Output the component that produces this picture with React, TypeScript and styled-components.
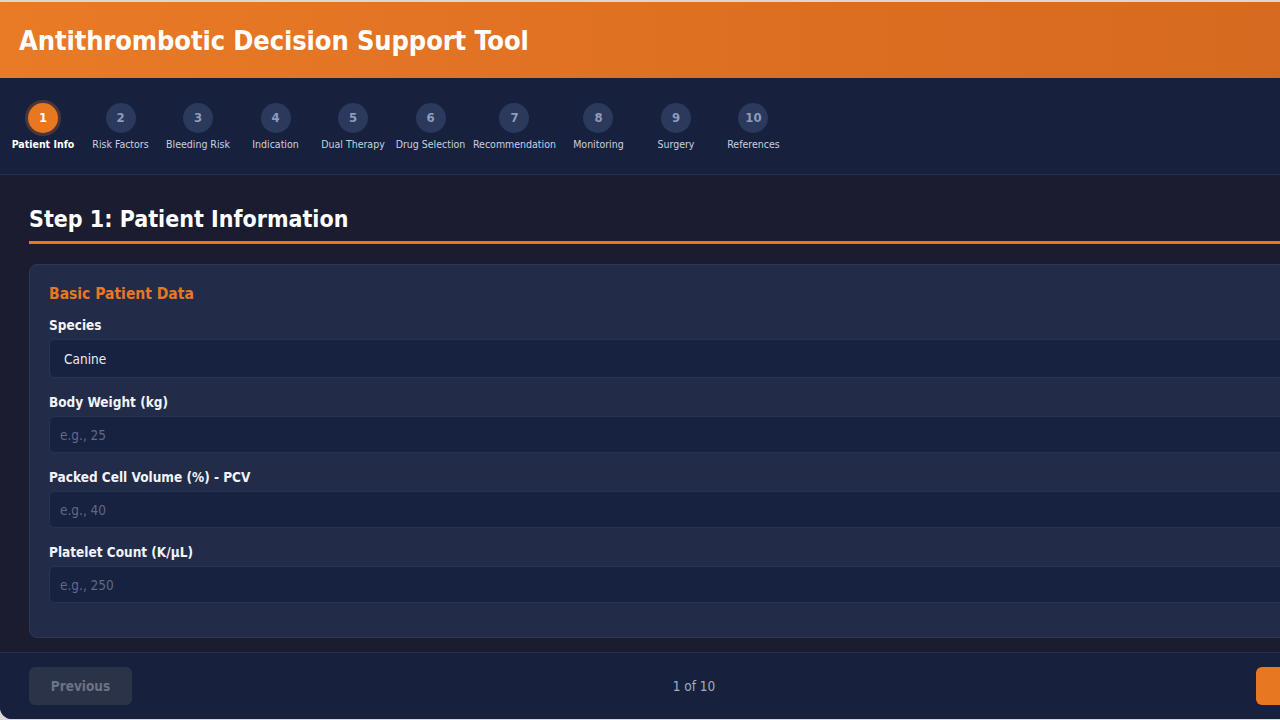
import React, { useState } from 'react';
import styled, { createGlobalStyle } from 'styled-components';

const GlobalStyle = createGlobalStyle`
  html, body {
    margin: 0;
    padding: 0;
    background: #d8d8d8;
    overflow: hidden;
  }
  * {
    box-sizing: border-box;
  }
`;

const FONT = `"DejaVu Sans Condensed", "DejaVu Sans", sans-serif`;

const Shell = styled.div`
  width: 1388px;
  height: 717px;
  margin-top: 2px;
  border-radius: 0 0 12px 12px;
  overflow: hidden;
  display: flex;
  flex-direction: column;
  font-family: ${FONT};
  background: #1b1c30;
`;

const Header = styled.header`
  height: 76px;
  padding: 0 19px;
  display: flex;
  align-items: center;
  background: linear-gradient(90deg, #e97a26 0%, #dc6e21 60%, #d4691f 100%);
`;

const Title = styled.h1`
  margin: 0;
  color: #ffffff;
  font-size: 27px;
  font-weight: 700;
  letter-spacing: -0.1px;
`;

const StepNav = styled.nav`
  height: 97px;
  padding: 0 8px;
  display: flex;
  align-items: center;
  gap: 7.5px;
  background: #17213e;
  border-bottom: 1px solid #243152;
`;

const Step = styled.div`
  min-width: 70px;
  display: flex;
  flex-direction: column;
  align-items: center;
  gap: 5px;
`;

const Circle = styled.div<{ $active?: boolean }>`
  width: 30px;
  height: 30px;
  border-radius: 50%;
  display: flex;
  align-items: center;
  justify-content: center;
  font-size: 13px;
  font-weight: 700;
  color: ${(p) => (p.$active ? '#ffffff' : '#8e9cbd')};
  background: ${(p) => (p.$active ? '#e87722' : '#2b395c')};
  box-shadow: ${(p) => (p.$active ? '0 0 0 3px rgba(232, 119, 34, 0.25)' : 'none')};
`;

const StepLabel = styled.span<{ $active?: boolean }>`
  font-size: 10.5px;
  white-space: nowrap;
  color: ${(p) => (p.$active ? '#ffffff' : '#c9d0e0')};
  font-weight: ${(p) => (p.$active ? 700 : 400)};
`;

const Main = styled.main`
  flex: 1;
  padding: 31px 0 14px 29px;
  background: #1b1c30;
`;

const Heading = styled.h2`
  margin: 0 0 20px;
  padding-bottom: 9px;
  border-bottom: 3px solid #e87722;
  color: #ffffff;
  font-size: 23px;
  font-weight: 700;
`;

const Card = styled.section`
  background: #222b48;
  border: 1px solid #2d3756;
  border-radius: 8px;
  padding: 20px 20px 34px 19px;
`;

const SectionTitle = styled.h3`
  margin: 0 0 14px;
  color: #e87722;
  font-size: 15.5px;
  font-weight: 700;
`;

const Field = styled.div`
  display: flex;
  flex-direction: column;
  gap: 5px;
  & + & {
    margin-top: 16px;
  }
`;

const Label = styled.label`
  color: #f1f3f8;
  font-size: 13.5px;
  font-weight: 700;
  line-height: 17px;
`;

const Select = styled.select`
  appearance: none;
  height: 39px;
  padding: 0 14px;
  background: #172140;
  border: 1px solid #283354;
  border-radius: 6px;
  color: #e8ebf2;
  font-family: ${FONT};
  font-size: 13.5px;
  outline: none;
`;

const Input = styled.input`
  height: 37px;
  padding: 0 10px;
  background: #172140;
  border: 1px solid #283354;
  border-radius: 6px;
  color: #e8ebf2;
  font-family: ${FONT};
  font-size: 13.5px;
  outline: none;
  &::placeholder {
    color: #5f6a84;
  }
`;

const Footer = styled.footer`
  height: 67px;
  padding: 0 29px;
  display: flex;
  align-items: center;
  justify-content: space-between;
  background: #17213e;
  border-top: 1px solid #25304f;
`;

const NavButton = styled.button<{ $primary?: boolean }>`
  height: 38px;
  width: 103px;
  padding: 0;
  border: none;
  border-radius: 6px;
  font-family: ${FONT};
  font-size: 13.5px;
  font-weight: 700;
  color: ${(p) => (p.$primary ? '#ffffff' : '#6b7488')};
  background: ${(p) => (p.$primary ? '#e87722' : '#2a3347')};
`;

const PageCount = styled.span`
  color: #a3abbd;
  font-size: 13.5px;
`;

const steps = [
  'Patient Info',
  'Risk Factors',
  'Bleeding Risk',
  'Indication',
  'Dual Therapy',
  'Drug Selection',
  'Recommendation',
  'Monitoring',
  'Surgery',
  'References',
];

const App = () => {
  const [current] = useState(0);

  return (
    <>
      <GlobalStyle />
      <Shell>
        <Header>
          <Title>Antithrombotic Decision Support Tool</Title>
        </Header>
        <StepNav>
          {steps.map((name, idx) => (
            <Step key={name}>
              <Circle $active={idx === current}>{idx + 1}</Circle>
              <StepLabel $active={idx === current}>{name}</StepLabel>
            </Step>
          ))}
        </StepNav>
        <Main>
          <Heading>Step 1: Patient Information</Heading>
          <Card>
            <SectionTitle>Basic Patient Data</SectionTitle>
            <Field>
              <Label>Species</Label>
              <Select defaultValue="canine">
                <option value="canine">Canine</option>
                <option value="feline">Feline</option>
              </Select>
            </Field>
            <Field>
              <Label>Body Weight (kg)</Label>
              <Input placeholder="e.g., 25" />
            </Field>
            <Field>
              <Label>Packed Cell Volume (%) - PCV</Label>
              <Input placeholder="e.g., 40" />
            </Field>
            <Field>
              <Label>Platelet Count (K/µL)</Label>
              <Input placeholder="e.g., 250" />
            </Field>
          </Card>
        </Main>
        <Footer>
          <NavButton disabled>Previous</NavButton>
          <PageCount>1 of 10</PageCount>
          <NavButton $primary>Next</NavButton>
        </Footer>
      </Shell>
    </>
  );
};

export default App;
